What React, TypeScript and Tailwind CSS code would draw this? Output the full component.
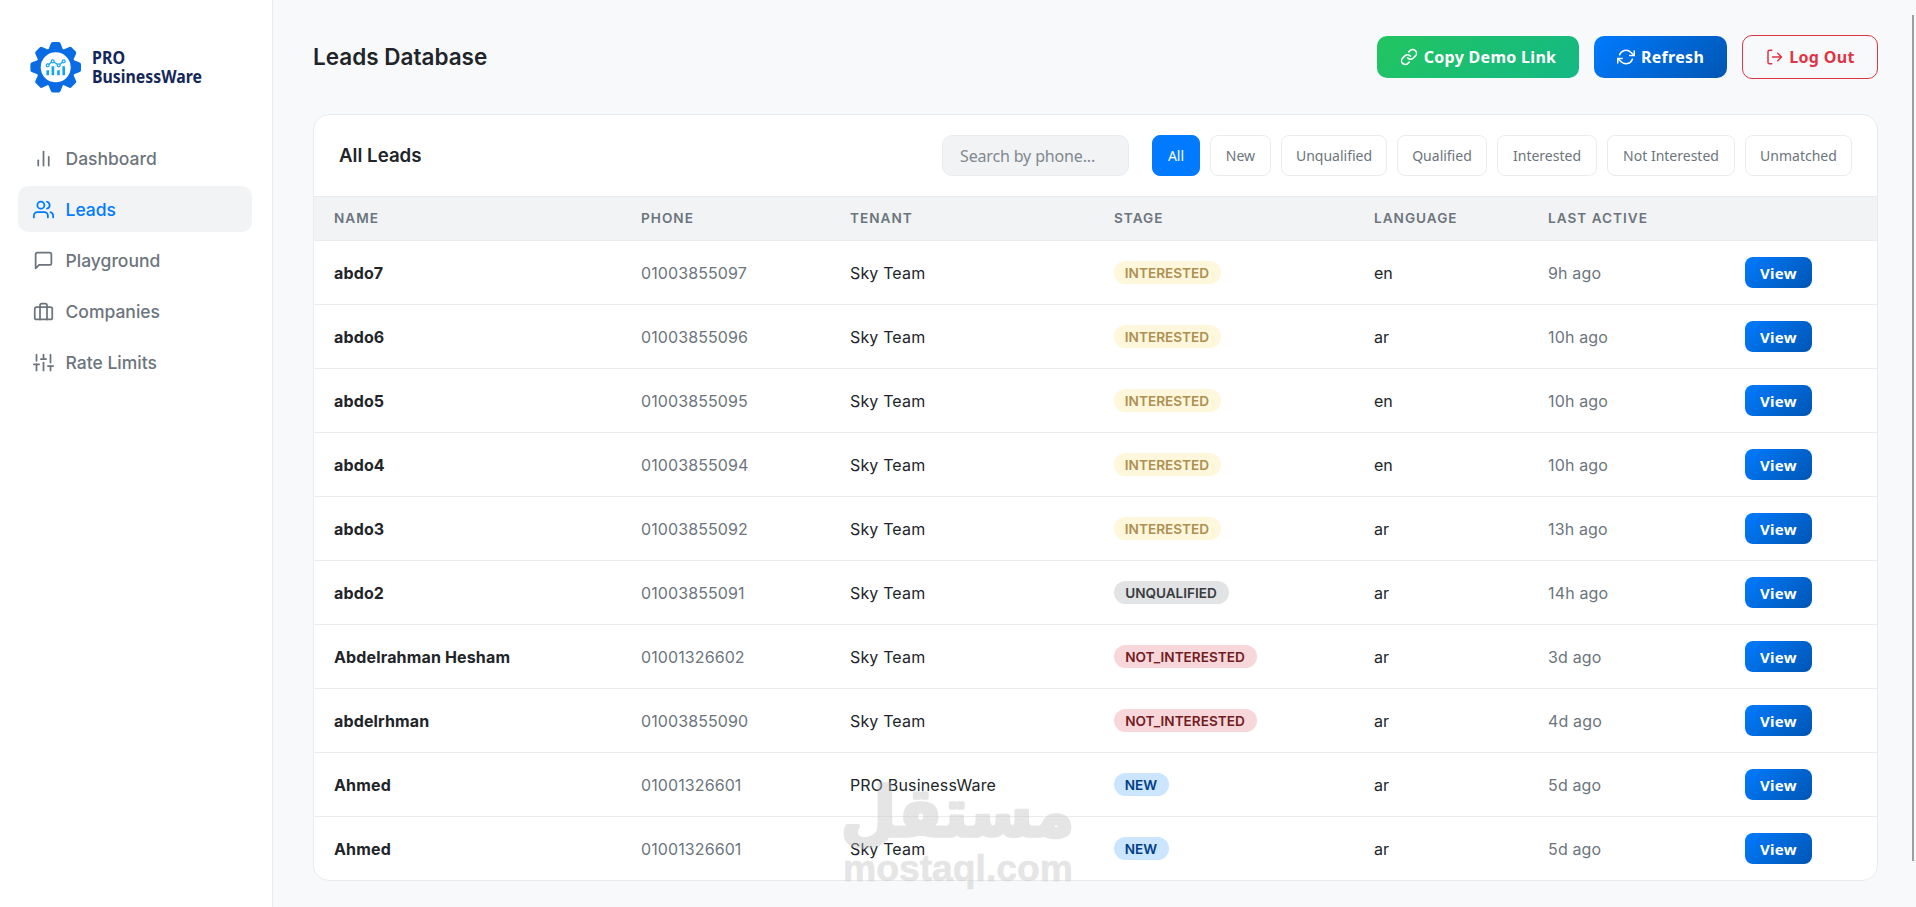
import React from 'react';
import { FiBarChart2, FiBriefcase, FiLink, FiMessageSquare, FiRefreshCw, FiSliders, FiUsers } from 'react-icons/fi';
import clsx from 'clsx';

type Stage = 'INTERESTED' | 'UNQUALIFIED' | 'NOT_INTERESTED' | 'NEW';

interface Lead {
  name: string;
  phone: string;
  tenant: string;
  stage: Stage;
  language: string;
  lastActive: string;
}

const LEADS: Lead[] = [
  { name: 'abdo7', phone: '01003855097', tenant: 'Sky Team', stage: 'INTERESTED', language: 'en', lastActive: '9h ago' },
  { name: 'abdo6', phone: '01003855096', tenant: 'Sky Team', stage: 'INTERESTED', language: 'ar', lastActive: '10h ago' },
  { name: 'abdo5', phone: '01003855095', tenant: 'Sky Team', stage: 'INTERESTED', language: 'en', lastActive: '10h ago' },
  { name: 'abdo4', phone: '01003855094', tenant: 'Sky Team', stage: 'INTERESTED', language: 'en', lastActive: '10h ago' },
  { name: 'abdo3', phone: '01003855092', tenant: 'Sky Team', stage: 'INTERESTED', language: 'ar', lastActive: '13h ago' },
  { name: 'abdo2', phone: '01003855091', tenant: 'Sky Team', stage: 'UNQUALIFIED', language: 'ar', lastActive: '14h ago' },
  { name: 'Abdelrahman Hesham', phone: '01001326602', tenant: 'Sky Team', stage: 'NOT_INTERESTED', language: 'ar', lastActive: '3d ago' },
  { name: 'abdelrhman', phone: '01003855090', tenant: 'Sky Team', stage: 'NOT_INTERESTED', language: 'ar', lastActive: '4d ago' },
  { name: 'Ahmed', phone: '01001326601', tenant: 'PRO BusinessWare', stage: 'NEW', language: 'ar', lastActive: '5d ago' },
  { name: 'Ahmed', phone: '01001326601', tenant: 'Sky Team', stage: 'NEW', language: 'ar', lastActive: '5d ago' },
];

const STAGE_STYLES: Record<Stage, string> = {
  INTERESTED: 'w-[107px] bg-[#fff7dc] text-[#ad9052]',
  UNQUALIFIED: 'w-[115px] bg-[#e2e3e5] text-[#383d41]',
  NOT_INTERESTED: 'w-[143px] bg-[#f8d7da] text-[#721c24]',
  NEW: 'w-[55px] bg-[#cce5ff] text-[#004085]',
};

const FILTERS = [
  { label: 'All', width: 'w-12' },
  { label: 'New', width: 'w-[61px]' },
  { label: 'Unqualified', width: 'w-[106px]' },
  { label: 'Qualified', width: 'w-[90px]' },
  { label: 'Interested', width: 'w-[100px]' },
  { label: 'Not Interested', width: 'w-32' },
  { label: 'Unmatched', width: 'w-[107px]' },
];

const COLUMNS = [
  { label: 'Name', width: 'w-[307px]' },
  { label: 'Phone', width: 'w-[209px]' },
  { label: 'Tenant', width: 'w-[264px]' },
  { label: 'Stage', width: 'w-[260px]' },
  { label: 'Language', width: 'w-[174px]' },
  { label: 'Last Active', width: 'w-[197px]' },
  { label: '', width: 'w-[152px]' },
];

const NAV_ITEMS = [
  { label: 'Dashboard', icon: FiBarChart2 },
  { label: 'Leads', icon: FiUsers, active: true },
  { label: 'Playground', icon: FiMessageSquare },
  { label: 'Companies', icon: FiBriefcase },
  { label: 'Rate Limits', icon: FiSliders },
];

const Logo = () => (
  <svg width="195" height="75" viewBox="0 0 195 75" className="ml-[1px]">
    <g transform="translate(36.7 37.3)">
      <g fill="#0a6ce4">
        {[0, 45, 90, 135, 180, 225, 270, 315].map((angle) => (
          <path key={angle} transform={`rotate(${angle})`} d="M-7.500 -17 L-5 -23.500 Q-4.500 -25.300 -3 -25.300 H3 Q4.500 -25.300 5 -23.500 L7.500 -17Z" />
        ))}
        <circle r="19.5" />
      </g>
      <circle r="15" fill="#fff" />
      <g fill="none" stroke="#12a5f0">
        <path d="M-8 8V3M-2.800 8V-1M2.800 8V3M8 8V-1" strokeWidth="2.6" />
        <path d="M-8 -2L-3 -6L3 -2L8 -6" strokeWidth="1.2" />
        <g fill="#fff" strokeWidth="1.2">
          <circle cx="-8" cy="-2" r="1.5" />
          <circle cx="-3" cy="-6" r="1.5" />
          <circle cx="3" cy="-2" r="1.5" />
          <circle cx="8" cy="-6" r="1.5" />
        </g>
      </g>
    </g>
    <g fill="#15275a" fontFamily="'Noto Sans', sans-serif" fontWeight="700" fontSize="17">
      <text x="73" y="34" textLength="33" lengthAdjust="spacingAndGlyphs">PRO</text>
      <text x="73" y="53" textLength="110" lengthAdjust="spacingAndGlyphs">BusinessWare</text>
    </g>
  </svg>
);

const Sidebar = () => (
  <aside className="flex h-full w-[273px] shrink-0 flex-col border-r border-[#e9ecef] bg-white px-[18px] pt-[30px]">
    <Logo />
    <nav className="mt-[30px] flex flex-col gap-[5px]">
      {NAV_ITEMS.map(({ label, icon: Icon, active }) => (
        <a
          key={label}
          className={clsx(
            'flex h-[46px] w-[234px] items-center gap-3 rounded-[10px] pl-[14.5px] text-[17.5px] font-medium',
            active ? 'bg-[#f1f3f5] text-[#007bff]' : 'text-[#6c757d]',
          )}
        >
          <Icon size={21} />
          <span className="pt-[2px]">{label}</span>
        </a>
      ))}
    </nav>
  </aside>
);

const Toolbar = () => (
  <header className="flex h-11 items-center justify-between">
    <h1 className="text-[22.5px] font-semibold text-[#212529]">Leads Database</h1>
    <div className="flex items-center gap-[15px] font-['Noto_Sans',sans-serif] text-base font-bold tracking-[0.3px] text-white">
      <button className="flex h-[42px] w-[202px] items-center justify-center gap-1.5 rounded-[10px] bg-linear-135 from-[#22c55e] to-[#14b884]">
        <FiLink size={18} />
        Copy Demo Link
      </button>
      <button className="flex h-[42px] w-[133px] items-center justify-center gap-1.5 rounded-[10px] bg-linear-135 from-[#007bff] to-[#0056b3]">
        <FiRefreshCw size={18} />
        Refresh
      </button>
      <button className="flex h-11 w-[136px] items-center justify-center gap-1.5 rounded-[10px] border border-[#dc3545] text-[#dc3545]">
        <svg
          width="18"
          height="18"
          viewBox="0 0 24 24"
          fill="none"
          stroke="currentColor"
          strokeWidth="2"
          strokeLinecap="round"
          strokeLinejoin="round"
        >
          <path d="M9 21H6a2 2 0 0 1-2-2V5a2 2 0 0 1 2-2h3M17 17l5-5-5-5M22 12H10" />
        </svg>
        Log Out
      </button>
    </div>
  </header>
);

const LeadRow: React.FC<{ lead: Lead; last: boolean }> = ({ lead, last }) => (
  <tr className={clsx('*:border-[#e9ecef] *:px-5', last ? 'h-[63px]' : 'h-16 *:border-b')}>
    <td className="font-bold tracking-[0.15px]">{lead.name}</td>
    <td className="tracking-[0.1px] text-[#6c757d]">{lead.phone}</td>
    <td className="tracking-[0.15px]">{lead.tenant}</td>
    <td>
      <span className={clsx('mb-px flex h-[23px] items-center justify-center rounded-full pt-[2px] pr-px text-[13.6px] font-semibold', STAGE_STYLES[lead.stage])}>
        {lead.stage}
      </span>
    </td>
    <td>{lead.language}</td>
    <td className="tracking-[0.15px] text-[#6c757d]">{lead.lastActive}</td>
    <td>
      <button className="block h-[31px] w-[67px] rounded-lg bg-linear-135 from-[#007bff] to-[#0056b3] pt-px font-['Noto_Sans',sans-serif] text-[15px] font-bold tracking-[0.3px] text-white">
        View
      </button>
    </td>
  </tr>
);

const LeadsCard = () => (
  <section className="mt-[35px] overflow-hidden rounded-2xl border border-[#e9ecef] bg-white">
    <div className="flex h-[82px] items-center justify-between border-b border-[#e9ecef] px-[25px]">
      <h2 className="pt-[2px] text-[18.7px] font-semibold">All Leads</h2>
      <div className="flex gap-2.5 font-['Noto_Sans',sans-serif] text-sm text-[#6c757d]">
        <input
          placeholder="Search by phone..."
          className="mr-[13px] h-[41px] w-[187px] rounded-[10px] border border-[#e9ecef] bg-[#f1f3f5] px-[17px] text-base tracking-[-0.15px] placeholder:text-[#80888f]"
        />
        {FILTERS.map((filter) => (
          <button
            key={filter.label}
            className={clsx(
              'h-[41px] rounded-lg border whitespace-nowrap',
              filter.width,
              filter.label === 'All' ? 'border-[#007bff] bg-[#007bff] text-white' : 'border-[#e9ecef]',
            )}
          >
            {filter.label}
          </button>
        ))}
      </div>
    </div>
    <table className="w-full table-fixed border-separate border-spacing-0 text-left text-base">
      <thead>
        <tr className="h-11 bg-[#f1f3f5] text-[13.6px] tracking-[1px] text-[#6c757d] uppercase">
          {COLUMNS.map((col) => (
            <th key={col.label} className={clsx('border-b border-[#e9ecef] px-5 font-semibold', col.width)}>
              {col.label}
            </th>
          ))}
        </tr>
      </thead>
      <tbody>
        {LEADS.map((lead, i) => (
          <LeadRow key={i} lead={lead} last={i === LEADS.length - 1} />
        ))}
      </tbody>
    </table>
  </section>
);

// Translucent stamp over the bottom of the table
const Watermark = () => (
  <svg className="pointer-events-none absolute top-[770px] left-[840px] overflow-visible" width="236" height="130" viewBox="0 0 236 130">
    <g opacity="0.4" fill="#c0c0c0" stroke="#c0c0c0" strokeLinejoin="round" fontWeight="700">
      <text
        transform="translate(117.5 66) scale(0.94 1)"
        textAnchor="middle"
        direction="rtl"
        fontFamily="'DejaVu Sans', sans-serif"
        fontSize="68"
        strokeWidth="3.5"
      >
        مستقل
      </text>
      <text
        x="3"
        y="111"
        textLength="230"
        lengthAdjust="spacingAndGlyphs"
        fontFamily="'Liberation Sans', sans-serif"
        fontSize="37"
        strokeWidth="0.6"
      >
        mostaql.com
      </text>
    </g>
  </svg>
);

export default function App() {
  return (
    <div className="relative flex h-[907px] w-full overflow-hidden bg-[#f8f9fb] font-['Inter',sans-serif] text-[#212529]">
      <Sidebar />
      <main className="flex-1 pt-[35px] pr-[38px] pl-10">
        <Toolbar />
        <LeadsCard />
      </main>
      <Watermark />
      <div className="absolute top-[15px] right-[2px] h-[846px] w-[2px] bg-[#9b9ea3]" />
    </div>
  );
}
